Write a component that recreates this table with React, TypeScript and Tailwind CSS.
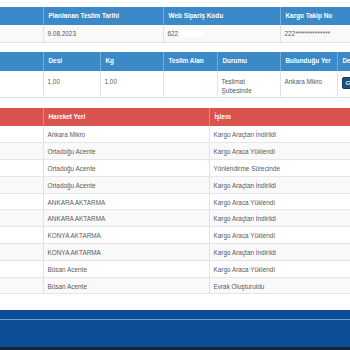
const font = { fontFamily: '"Liberation Sans", Arial, sans-serif' };

const moves = [
  ["Ankara Mikro", "Kargo Araçtan İndirildi"],
  ["Ortadoğu Acente", "Kargo Araca Yüklendi"],
  ["Ortadoğu Acente", "Yönlendirme Sürecinde"],
  ["Ortadoğu Acente", "Kargo Araçtan İndirildi"],
  ["ANKARA AKTARMA", "Kargo Araca Yüklendi"],
  ["ANKARA AKTARMA", "Kargo Araçtan İndirildi"],
  ["KONYA AKTARMA", "Kargo Araca Yüklendi"],
  ["KONYA AKTARMA", "Kargo Araçtan İndirildi"],
  ["Büsan Acente", "Kargo Araca Yüklendi"],
  ["Büsan Acente", "Evrak Oluşturuldu"],
];

const th = "border-l border-white/30 px-[5px] text-left align-middle font-bold text-white text-[6.4px]";
const td = "border-l border-[#e2e2e2] px-[4px] align-top text-[#5a5a5a] text-[6.4px] leading-[9px]";

export default function App() {
  return (
    <div className="w-[350px] h-[350px] overflow-hidden bg-white flex flex-col" style={font}>
      <div className="pt-[7px] w-[420px]">
        <table className="table-fixed border-collapse w-[420px]">
          <colgroup>
            <col className="w-[43px]" />
            <col className="w-[120px]" />
            <col className="w-[117px]" />
            <col className="w-[140px]" />
          </colgroup>
          <thead>
            <tr className="bg-[#3c89c8] h-[18px]">
              <th className="px-[5px]"></th>
              <th className={th}>Planlanan Teslim Tarihi</th>
              <th className={th}>Web Sipariş Kodu</th>
              <th className={th}>Kargo Takip No</th>
            </tr>
          </thead>
          <tbody>
            <tr className="bg-[#f9f9f9] h-[17px] border-b border-[#e2e2e2]">
              <td className="px-[5px]"></td>
              <td className={`${td} pt-[4px]`}>9.08.2023</td>
              <td className={`${td} pt-[4px]`}>
                <div className="flex items-center gap-[3px]">
                  <span>622</span>
                  <span className="inline-block w-[22px] h-[7px] bg-white"></span>
                </div>
              </td>
              <td className={`${td} pt-[4px]`}>222**************</td>
            </tr>
          </tbody>
        </table>

        <table className="table-fixed border-collapse w-[420px] mt-[9px]">
          <colgroup>
            <col className="w-[43px]" />
            <col className="w-[57px]" />
            <col className="w-[63px]" />
            <col className="w-[54px]" />
            <col className="w-[63px]" />
            <col className="w-[57px]" />
            <col className="w-[83px]" />
          </colgroup>
          <thead>
            <tr className="bg-[#3c89c8] h-[19px]">
              <th className="px-[5px]"></th>
              <th className={th}>Desi</th>
              <th className={th}>Kg</th>
              <th className={th}>Teslim Alan</th>
              <th className={th}>Durumu</th>
              <th className={th}>Bulunduğu Yer</th>
              <th className={th}>Detay</th>
            </tr>
          </thead>
          <tbody>
            <tr className="bg-white h-[27px] border-b border-[#e2e2e2]">
              <td className="px-[5px]"></td>
              <td className={`${td} pt-[6px]`}>1,00</td>
              <td className={`${td} pt-[6px]`}>1,00</td>
              <td className={`${td} pt-[6px]`}></td>
              <td className={`${td} pt-[6px]`}>
                Teslimat
                <br />
                Şubesinde
              </td>
              <td className={`${td} pt-[6px]`}>Ankara Mikro</td>
              <td className={`${td} pt-[6px]`}>
                <button className="h-[12px] px-[3px] rounded-[2px] bg-[#1f4f7c] border border-[#163a5c] text-[#dbe6f0] text-[6px] font-bold leading-none">
                  Göster
                </button>
              </td>
            </tr>
          </tbody>
        </table>

        <table className="table-fixed border-collapse w-[420px] mt-[10px]">
          <colgroup>
            <col className="w-[43px]" />
            <col className="w-[166px]" />
            <col className="w-[211px]" />
          </colgroup>
          <thead>
            <tr className="bg-[#d9534f] h-[18px]">
              <th className="px-[5px]"></th>
              <th className={th}>Hareket Yeri</th>
              <th className={th}>İşlem</th>
            </tr>
          </thead>
          <tbody>
            {moves.map(([place, action], i) => (
              <tr
                key={i}
                className={`h-[16.8px] border-b border-[#e6e6e6] ${i % 2 === 0 ? "bg-white" : "bg-[#f9f9f9]"}`}
              >
                <td className="px-[5px]"></td>
                <td className={`${td} pt-[4px]`}>{place}</td>
                <td className={`${td} pt-[4px]`}>{action}</td>
              </tr>
            ))}
          </tbody>
        </table>
      </div>

      <div className="mt-auto h-[40px] bg-[#0b4e96] flex flex-col">
        <div className="h-[9px]"></div>
        <div className="h-px bg-[#6d9fd3]"></div>
        <div className="flex-1"></div>
        <div className="h-[3px] bg-[#15273c]"></div>
      </div>
    </div>
  );
}
